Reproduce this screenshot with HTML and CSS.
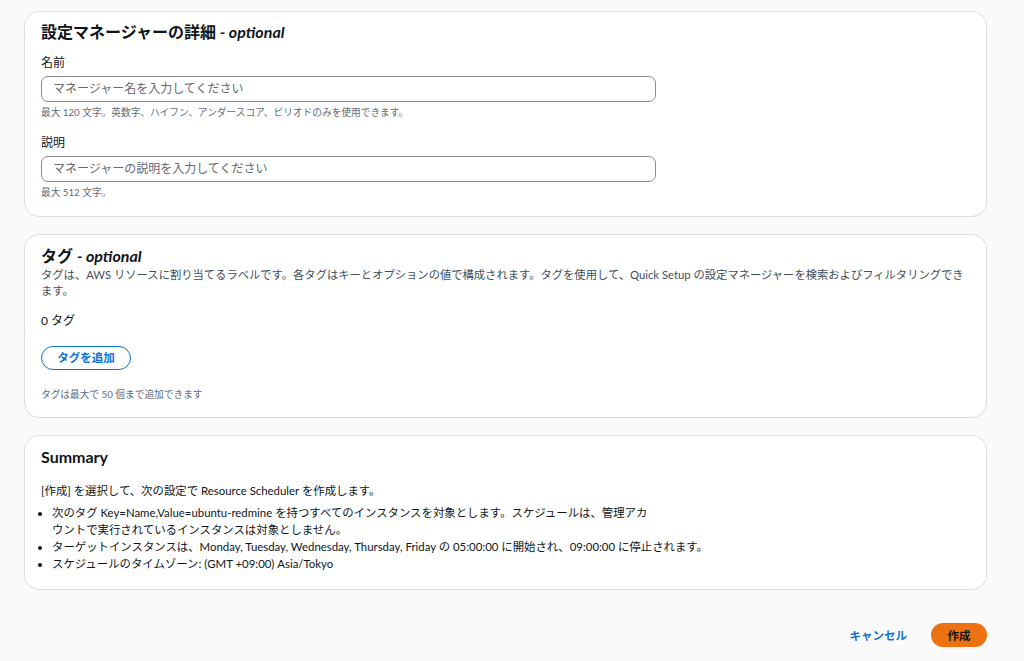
FILE: index.html
```html
<!DOCTYPE html>
<html lang="ja">
<head>
<meta charset="utf-8">
<link rel="stylesheet" href="styles.css">
</head>
<body>
<div class="page">
  <section class="card card-details">
    <h2 class="card-title">設定マネージャーの詳細 <i>- optional</i></h2>
    <div class="field">
      <label class="field-label">名前</label>
      <div class="input">マネージャー名を入力してください</div>
      <div class="hint">最大 120 文字。英数字、ハイフン、アンダースコア、ピリオドのみを使用できます。</div>
    </div>
    <div class="field">
      <label class="field-label">説明</label>
      <div class="input">マネージャーの説明を入力してください</div>
      <div class="hint">最大 512 文字。</div>
    </div>
  </section>

  <section class="card card-tags">
    <h2 class="card-title">タグ <i>- optional</i></h2>
    <p class="desc">タグは、AWS リソースに割り当てるラベルです。各タグはキーとオプションの値で構成されます。タグを使用して、Quick Setup の設定マネージャーを検索およびフィルタリングできます。</p>
    <div class="tag-count">0 タグ</div>
    <div class="btn-row"><button class="btn-outline">タグを追加</button></div>
    <div class="hint">タグは最大で 50 個まで追加できます</div>
  </section>

  <section class="card card-summary">
    <h2 class="card-title summary-title">Summary</h2>
    <p class="summary-text">[作成] を選択して、次の設定で Resource Scheduler を作成します。</p>
    <ul class="summary-list">
      <li>次のタグ Key=Name,Value=ubuntu-redmine を持つすべてのインスタンスを対象とします。スケジュールは、管理アカ<br>ウントで実行されているインスタンスは対象としません。</li>
      <li>ターゲットインスタンスは、Monday, Tuesday, Wednesday, Thursday, Friday の 05:00:00 に開始され、09:00:00 に停止されます。</li>
      <li>スケジュールのタイムゾーン: (GMT +09:00) Asia/Tokyo</li>
    </ul>
  </section>

  <div class="footer">
    <button class="btn-link">キャンセル</button>
    <button class="btn-primary">作成</button>
  </div>
</div>
</body>
</html>
```

FILE: styles.css
```css
html, body {
  margin: 0;
  padding: 0;
  background: #fafafa;
}
body {
  font-family: "Lato", "Noto Sans CJK JP", sans-serif;
  color: #0f141a;
}
.page {
  width: 963px;
  padding: 11px 37px 0 24px;
  display: flex;
  flex-direction: column;
  gap: 17px;
}
.card {
  background: #ffffff;
  border: 1px solid #dcdde0;
  border-radius: 15px;
  padding: 10px 16px 17px 16px;
  display: flex;
  flex-direction: column;
}
.card-title {
  margin: 0;
  font-size: 16px;
  line-height: 20px;
  font-weight: 700;
  color: #0f141a;
}
.card-title i {
  font-style: italic;
}
.field {
  display: flex;
  flex-direction: column;
  margin-top: 13px;
}
.field + .field {
  margin-top: 16px;
}
.field-label {
  font-size: 12px;
  line-height: 16px;
  color: #0f141a;
}
.input {
  margin-top: 5px;
  width: 591px;
  height: 24px;
  box-sizing: content-box;
  border: 1px solid #8c8c94;
  border-radius: 7px;
  padding: 0 11px;
  font-size: 12px;
  line-height: 24px;
  color: #656871;
  font-family: "Lato", "Noto Sans CJK JP", sans-serif;
}
.hint {
  margin-top: 3px;
  font-size: 9.7px;
  line-height: 14px;
  color: #5f6b7a;
}
.card-tags {
  padding-top: 11px;
  padding-bottom: 16px;
}
.desc {
  margin: 1px 0 0 0;
  font-size: 11.3px;
  line-height: 16px;
  color: #414d5c;
  width: 928px;
}
.tag-count {
  margin-top: 14px;
  font-size: 12px;
  line-height: 16px;
}
.btn-row {
  margin-top: 17px;
  display: flex;
}
.btn-outline {
  height: 24px;
  width: 90px;
  border: 1px solid #0972d3;
  border-radius: 12px;
  background: #ffffff;
  color: #0972d3;
  font-family: "Lato", "Noto Sans CJK JP", sans-serif;
  font-size: 11.5px;
  font-weight: 700;
  padding: 0;
  line-height: 22px;
}
.card-tags .hint {
  margin-top: 17px;
}
.card-summary {
  padding-top: 11px;
  padding-bottom: 17px;
}
.summary-title {
  line-height: 20px;
}
.summary-text {
  margin: 15px 0 0 0;
  font-size: 11.4px;
  line-height: 17px;
  color: #0f141a;
}
.summary-list {
  margin: 5px 0 0 0;
  padding-left: 11px;
  font-size: 11.4px;
  line-height: 17px;
  color: #0f141a;
}
.footer {
  display: flex;
  justify-content: flex-end;
  align-items: center;
  gap: 24px;
  margin-top: 16px;
}
.btn-link {
  background: none;
  border: none;
  padding: 0;
  color: #0972d3;
  font-family: "Lato", "Noto Sans CJK JP", sans-serif;
  font-size: 11.5px;
  font-weight: 700;
}
.btn-primary {
  width: 56px;
  height: 24px;
  border: none;
  border-radius: 12px;
  background: #ec7211;
  color: #0f141a;
  font-family: "Lato", "Noto Sans CJK JP", sans-serif;
  font-size: 11.5px;
  font-weight: 700;
  padding: 0;
}
```
